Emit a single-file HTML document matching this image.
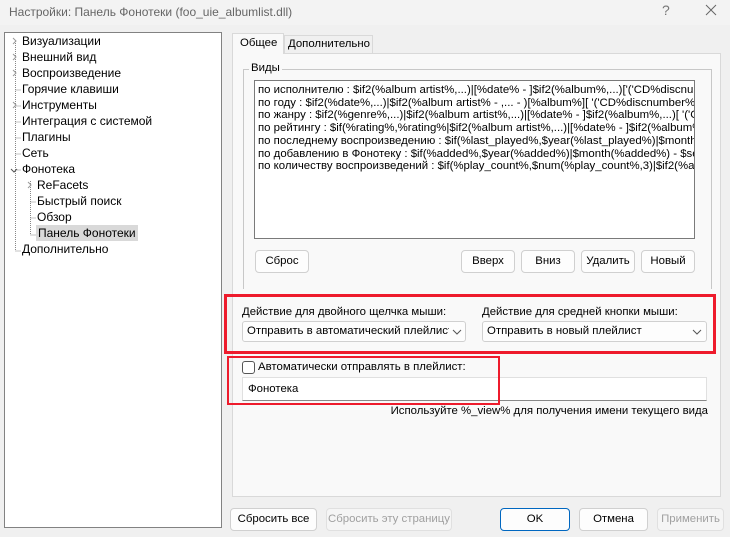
<!DOCTYPE html>
<html><head><meta charset="utf-8"><style>
*{box-sizing:border-box;margin:0;padding:0}
html,body{width:730px;height:537px;overflow:hidden}
body{background:#f0f0f0;font:11.4px "Liberation Sans",sans-serif;color:#000;position:relative}
.a{position:absolute;white-space:nowrap}
.btn{position:absolute;height:23px;background:#fdfdfd;border:1px solid #d0d0d0;border-radius:4px;text-align:center;line-height:21px;white-space:nowrap;overflow:hidden}
.dis{color:#a0a0a0;background:#f5f5f5;border-color:#e0e0e0}
.tree .a{line-height:16px;font-size:12px}
</style></head><body>
<div class="a" style="left:0;top:0;width:730px;height:25px;background:#f3f3f3"></div>
<div class="a" style="left:9px;top:5px;color:#666;font-size:12px">Настройки: Панель Фонотеки (foo_uie_albumlist.dll)</div>
<div class="a" style="left:662px;top:2px;color:#777;font-size:14px">?</div>
<svg class="a" style="left:705px;top:4px" width="12" height="12"><path d="M1 1L11 11M11 1L1 11" stroke="#666" stroke-width="1"/></svg>

<div class="a tree" style="left:4px;top:32px;width:218px;height:496px;background:#fff;border:1px solid #828282">
<svg class="a" style="left:0;top:0" width="218" height="240">
<g stroke="#888" stroke-dasharray="1,1" fill="none">
<path d="M10.5 8V218M10.5 57H16M10.5 73H16M10.5 89H16M10.5 105H16M10.5 121H16M10.5 137H16M10.5 218H16M25.5 148V202M25.5 169H31M25.5 185H31M25.5 202H31"/>
</g>
<g stroke="#999" fill="none"><path d="M8 5l3 3-3 3M8 21l3 3-3 3M8 37l3 3-3 3M8 69l3 3-3 3M23 149l3 3-3 3"/><path d="M6 136l3 3 3-3" stroke="#555"/></g>
</svg>
<div class="a" style="left:17px;top:0">Визуализации</div>
<div class="a" style="left:17px;top:16px">Внешний вид</div>
<div class="a" style="left:17px;top:32px">Воспроизведение</div>
<div class="a" style="left:17px;top:48px">Горячие клавиши</div>
<div class="a" style="left:17px;top:64px">Инструменты</div>
<div class="a" style="left:17px;top:80px">Интеграция с системой</div>
<div class="a" style="left:17px;top:96px">Плагины</div>
<div class="a" style="left:17px;top:112px">Сеть</div>
<div class="a" style="left:17px;top:128px">Фонотека</div>
<div class="a" style="left:32px;top:144px">ReFacets</div>
<div class="a" style="left:32px;top:160px">Быстрый поиск</div>
<div class="a" style="left:32px;top:176px">Обзор</div>
<div class="a" style="left:31px;top:192px;background:#d9d9d9;padding:0 2px">Панель Фонотеки</div>
<div class="a" style="left:17px;top:208px">Дополнительно</div>
</div>

<div class="a" style="left:232px;top:53px;width:489px;height:444px;background:#f9f9f9;border:1px solid #d9d9d9"></div>
<div class="a" style="left:232px;top:33px;width:52px;height:21px;background:#f9f9f9;border:1px solid #d9d9d9;border-bottom:none;padding:3px 0 0 7px">Общее</div>
<div class="a" style="left:284px;top:35px;width:89px;height:18px;background:#f0f0f0;border:1px solid #d9d9d9;border-bottom:none;padding:2px 0 0 3px">Дополнительно</div>

<div class="a" style="left:243px;top:69px;width:469px;height:220px;border:1px solid #c8c8c8;border-bottom:none"></div>
<div class="a" style="left:249px;top:62px;background:#f9f9f9;padding:0 2px">Виды</div>
<div class="a" style="left:254px;top:80px;width:441px;height:159px;background:#fff;border:1px solid #7a7a7a;overflow:hidden;padding:3px 0 0 3px;line-height:12.7px">
по исполнителю : $if2(%album artist%,...)|[%date% - ]$if2(%album%,...)['('CD%discnumber%')']<br>
по году : $if2(%date%,...)|$if2(%album artist% - ,... - )[%album%][ '('CD%discnumber%')']<br>
по жанру : $if2(%genre%,...)|$if2(%album artist%,...)|[%date% - ]$if2(%album%,...)[ '('CD<br>
по рейтингу : $if(%rating%,%rating%|$if2(%album artist%,...)|[%date% - ]$if2(%album%,...)<br>
по последнему воспроизведению : $if(%last_played%,$year(%last_played%)|$month(%last<br>
по добавлению в Фонотеку : $if(%added%,$year(%added%)|$month(%added%) - $second<br>
по количеству воспроизведений : $if(%play_count%,$num(%play_count%,3)|$if2(%album
</div>
<div class="btn" style="left:255px;top:250px;width:54px">Сброс</div>
<div class="btn" style="left:461px;top:250px;width:54px">Вверх</div>
<div class="btn" style="left:521px;top:250px;width:54px">Вниз</div>
<div class="btn" style="left:581px;top:250px;width:54px">Удалить</div>
<div class="btn" style="left:641px;top:250px;width:54px">Новый</div>

<div class="a" style="left:224px;top:294px;width:492px;height:60px;border:3px solid #ee1b2c"></div>
<div class="a" style="left:242px;top:306px">Действие для двойного щелчка мыши:</div>
<div class="a" style="left:482px;top:306px">Действие для средней кнопки мыши:</div>
<div class="a" style="left:242px;top:321px;width:224px;height:21px;background:#fdfdfd;border:1px solid #d0d0d0;border-radius:3px;padding:3px 0 0 4px;overflow:hidden"><span style="display:inline-block;width:202px;overflow:hidden">Отправить в автоматический плейлист</span></div>
<div class="a" style="left:482px;top:321px;width:225px;height:21px;background:#fdfdfd;border:1px solid #d0d0d0;border-radius:3px;padding:3px 0 0 4px">Отправить в новый плейлист</div>
<svg class="a" style="left:452px;top:329px" width="10" height="6"><path d="M1 1l4 4 4-4" stroke="#555" fill="none"/></svg>
<svg class="a" style="left:692px;top:329px" width="10" height="6"><path d="M1 1l4 4 4-4" stroke="#555" fill="none"/></svg>

<div class="a" style="left:242px;top:361px;width:13px;height:13px;border:1px solid #555;border-radius:3px;background:#fff"></div>
<div class="a" style="left:258px;top:361px">Автоматически отправлять в плейлист:</div>
<div class="a" style="left:242px;top:377px;width:465px;height:24px;background:#fff;border:1px solid #e0e0e0;border-bottom-color:#888;padding:5px 0 0 5px">Фонотека</div>
<div class="a" style="left:227px;top:356px;width:273px;height:49px;border:2px solid #ee1b2c"></div>
<div class="a" style="right:22px;top:405px">Используйте %_view% для получения имени текущего вида</div>

<div class="btn" style="left:230px;top:508px;width:87px">Сбросить все</div>
<div class="btn dis" style="left:326px;top:508px;width:126px">Сбросить эту страницу</div>
<div class="btn" style="left:500px;top:508px;width:70px;border-color:#0067c0">OK</div>
<div class="btn" style="left:579px;top:508px;width:69px">Отмена</div>
<div class="btn dis" style="left:657px;top:508px;width:67px">Применить</div>
</body></html>
